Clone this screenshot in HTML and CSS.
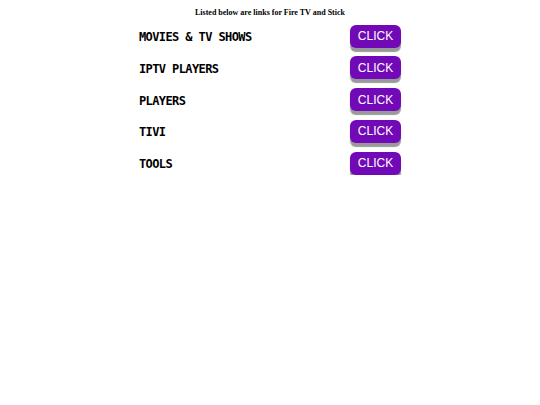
FILE: index.html
```html
<!DOCTYPE html>
<html>
<head>
<meta charset="utf-8">
<link rel="stylesheet" href="styles.css">
</head>
<body>
<h1 class="heading">Listed below are links for Fire TV and Stick</h1>
<div class="list">
  <div class="row"><span class="title">MOVIES &amp; TV SHOWS</span><a class="btn">CLICK</a></div>
  <div class="row"><span class="title">IPTV PLAYERS</span><a class="btn">CLICK</a></div>
  <div class="row"><span class="title">PLAYERS</span><a class="btn">CLICK</a></div>
  <div class="row"><span class="title">TIVI</span><a class="btn">CLICK</a></div>
  <div class="row"><span class="title">TOOLS</span><a class="btn">CLICK</a></div>
</div>
</body>
</html>
```
FILE: styles.css
```css
body {
  margin: 0;
  background: #fff;
  font-family: "Liberation Serif", serif;
}
.heading {
  margin: 0;
  padding-top: 8px;
  text-align: center;
  font-size: 8px;
  font-weight: bold;
  line-height: 10px;
  color: #000;
}
.list {
  width: 262px;
  margin: 6px auto 0;
  display: flex;
  flex-direction: column;
  gap: 7.8px;
}
.row {
  display: flex;
  justify-content: space-between;
  align-items: center;
  height: 24px;
}
.title {
  padding-top: 2px;
  font-family: "DejaVu Sans Mono", monospace;
  font-weight: bold;
  font-size: 12px;
  letter-spacing: -0.6px;
  color: #000;
}
.btn {
  width: 51px;
  height: 23px;
  box-sizing: border-box;
  display: flex;
  align-items: center;
  justify-content: center;
  background: #7209b7;
  color: #fff;
  border-radius: 6px;
  box-shadow: 0 4px 1px #999;
  font-family: "Liberation Sans", Arial, sans-serif;
  font-size: 12px;
}
```
